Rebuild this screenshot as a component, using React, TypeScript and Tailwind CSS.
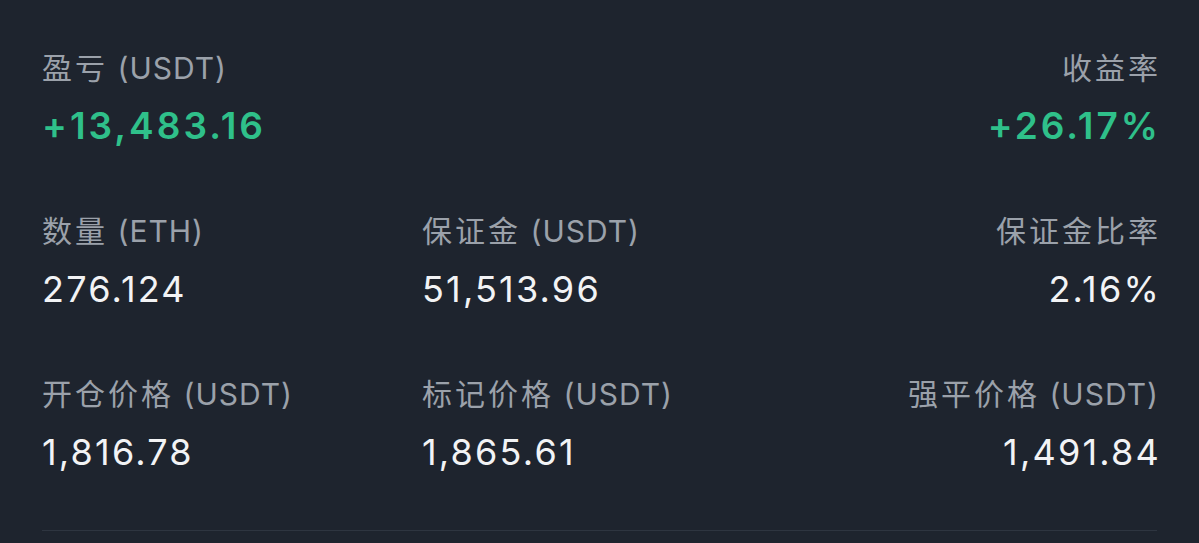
import React from "react";

type Cell = { cjk: string; latin: string; value: string; green?: boolean; align: "left" | "right" };

const rows: Cell[][] = [
  [
    { cjk: "盈亏", latin: " (USDT)", value: "+13,483.16", green: true, align: "left" },
    { cjk: "", latin: "", value: "", align: "left" },
    { cjk: "收益率", latin: "", value: "+26.17%", green: true, align: "right" },
  ],
  [
    { cjk: "数量", latin: " (ETH)", value: "276.124", align: "left" },
    { cjk: "保证金", latin: " (USDT)", value: "51,513.96", align: "left" },
    { cjk: "保证金比率", latin: "", value: "2.16%", align: "right" },
  ],
  [
    { cjk: "开仓价格", latin: " (USDT)", value: "1,816.78", align: "left" },
    { cjk: "标记价格", latin: " (USDT)", value: "1,865.61", align: "left" },
    { cjk: "强平价格", latin: " (USDT)", value: "1,491.84", align: "right" },
  ],
];

export default function App() {
  return (
    <div
      className="w-[1199px] h-[543px] bg-[#1e242e] overflow-hidden px-[42px] pt-[50px]"
      style={{ fontFamily: 'Inter, "Noto Sans CJK SC", sans-serif' }}
    >
      <div className="flex flex-col gap-[63px]">
        {rows.map((row, i) => (
          <div key={i} className="grid grid-cols-[380px_1fr_auto]">
            {row.map((c, j) => {
              const right = c.align === "right";
              return (
                <div
                  key={j}
                  className={`flex flex-col gap-[16px] ${right ? "items-end -mr-[2px]" : "items-start"}`}
                >
                  <div
                    className={`h-[36px] leading-[36px] text-[30px] text-[#9ba1aa] whitespace-pre ${
                      right && !c.latin ? "-mr-[2px]" : ""
                    }`}
                  >
                    <span className="tracking-[3px]">{c.cjk}</span>
                    <span className="tracking-[1px]">{c.latin}</span>
                  </div>
                  <div
                    className={`h-[48px] leading-[48px] ${right ? "-mr-[2px]" : ""} ${
                      c.green
                        ? "text-[37px] text-[#2fc08a] font-semibold tracking-[3px]"
                        : "text-[36px] text-[#f2f3f5] tracking-[2.2px]"
                    }`}
                  >
                    {c.value}
                  </div>
                </div>
              );
            })}
          </div>
        ))}
      </div>
      <div className="mt-[54px] h-px bg-[#2e3540]" />
    </div>
  );
}
